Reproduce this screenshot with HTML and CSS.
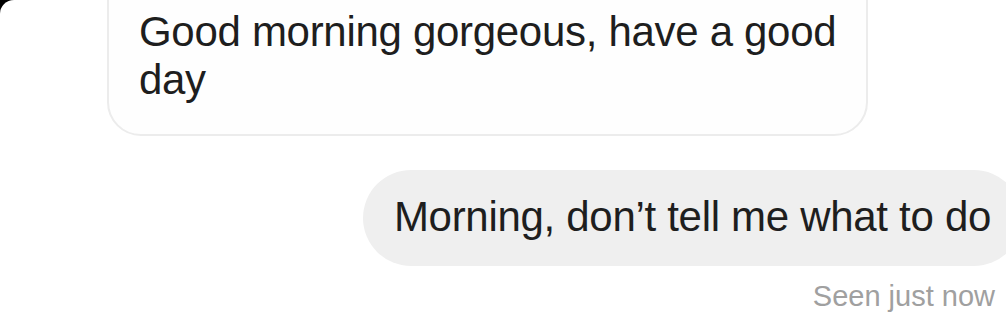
FILE: index.html
```html
<!DOCTYPE html>
<html>
<head>
<meta charset="utf-8">
<link rel="stylesheet" href="styles.css">
</head>
<body>
<div class="screen">
  <div class="thread">
    <div class="row row-in">
      <div class="bubble bubble-in">Good morning gorgeous, have a good day</div>
    </div>
    <div class="row row-out">
      <div class="bubble bubble-out">Morning, don’t tell me what to do</div>
    </div>
    <div class="row row-status">
      <span class="status">Seen just now</span>
    </div>
  </div>
</div>
</body>
</html>
```

FILE: styles.css
```css
html, body {
  margin: 0;
  padding: 0;
  background: #000;
}
body {
  width: 1006px;
  height: 312px;
  overflow: hidden;
  font-family: "Liberation Sans", Arial, sans-serif;
}
.screen {
  width: 1006px;
  height: 312px;
  background: #fff;
  border-top-left-radius: 14px;
  overflow: hidden;
}
.thread {
  display: flex;
  flex-direction: column;
}
.row {
  display: flex;
}
.row-in {
  padding-left: 107px;
  margin-top: -40px;
}
.bubble {
  font-size: 42px;
  line-height: 48px;
  color: #1e1e1e;
  box-sizing: border-box;
  letter-spacing: -0.3px;
}
.bubble-in {
  width: 761px;
  padding: 46px 4px 30px 30px;
  border: 2px solid #ececec;
  border-radius: 34px;
  background: #fefefe;
}
.row-out {
  justify-content: flex-end;
  margin-right: -16px;
  margin-top: 34px;
}
.bubble-out {
  background: #efefef;
  padding: 23px 31px 25px;
  border-radius: 48px;
}
.row-status {
  justify-content: flex-end;
  padding-right: 11px;
  margin-top: 14px;
}
.status {
  font-size: 29px;
  line-height: 32px;
  color: #a0a0a0;
}
```
